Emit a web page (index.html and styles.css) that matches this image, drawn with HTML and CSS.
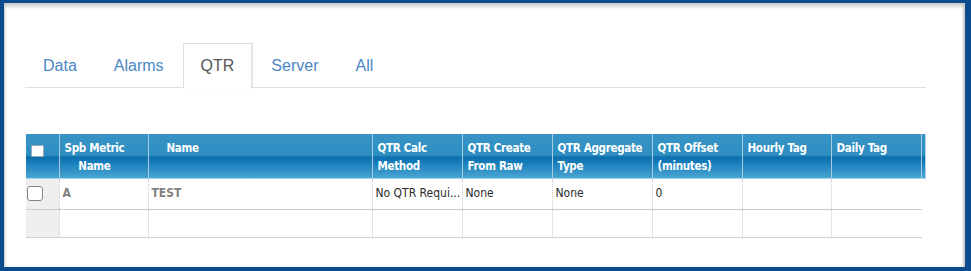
FILE: index.html
```html
<!DOCTYPE html>
<html lang="en">
<head>
<meta charset="UTF-8">
<title>QTR</title>
<link rel="stylesheet" href="styles.css">
</head>
<body>
<div class="frame">
  <ul class="tabs">
    <li class="tab">Data</li>
    <li class="tab">Alarms</li>
    <li class="tab active">QTR</li>
    <li class="tab">Server</li>
    <li class="tab">All</li>
  </ul>

  <div class="grid">
    <div class="grid-header">
      <table>
        <colgroup>
          <col class="c-check"><col class="c-spb"><col class="c-name"><col class="c-calc"><col class="c-raw">
          <col class="c-aggr"><col class="c-offset"><col class="c-hourly"><col class="c-daily">
        </colgroup>
        <tr>
          <th class="check-cell"><span class="check check-head"></span></th>
          <th><span class="centered">Spb Metric<br>Name</span></th>
          <th class="name-head">Name</th>
          <th>QTR Calc<br>Method</th>
          <th>QTR Create<br>From Raw</th>
          <th>QTR Aggregate<br>Type</th>
          <th>QTR Offset<br>(minutes)</th>
          <th>Hourly Tag</th>
          <th>Daily Tag</th>
        </tr>
      </table>
    </div>
    <div class="grid-content">
      <table>
        <colgroup>
          <col class="c-check"><col class="c-spb"><col class="c-name"><col class="c-calc"><col class="c-raw">
          <col class="c-aggr"><col class="c-offset"><col class="c-hourly"><col class="c-daily">
        </colgroup>
        <tr class="row-first">
          <td class="check-cell"><span class="check"></span></td>
          <td class="muted">A</td>
          <td class="muted">TEST</td>
          <td>No QTR Requi...</td>
          <td>None</td>
          <td>None</td>
          <td>0</td>
          <td></td>
          <td></td>
        </tr>
        <tr class="row-empty">
          <td class="check-cell"></td>
          <td></td><td></td><td></td><td></td><td></td><td></td><td></td><td></td>
        </tr>
      </table>
    </div>
  </div>
</div>
</body>
</html>
```

FILE: styles.css
```css
html, body {
  margin: 0;
  padding: 0;
}
body {
  width: 971px;
  height: 271px;
  font-family: "Liberation Sans", Arial, sans-serif;
  background: #0c4b8e;
}
div.frame {  /* white panel inside the blue frame */
  box-sizing: border-box;
  height: 271px;
  border-style: solid;
  border-color: #0c4b8e;
  border-width: 3px 6px 4px 4px;
  background: #fff;
  box-shadow: inset 0 4px 4px -1px #c4c4c4, inset 2px 0 2px -1px #cfcfcf, inset -3px 0 2px -1px #cfcfcf;
  padding: 40px 39px 0 21px;
}

/* ----- tabs ----- */
ul.tabs {
  display: flex;
  margin: 0;
  padding: 0;
  list-style: none;
  border-bottom: 1px solid #dedede;
}
li.tab {
  height: 43px;
  line-height: 43px;
  padding: 0 17px;
  margin: 0 1px -1px 0;
  border: 1px solid transparent;
  border-bottom: none;
  font-size: 16px;
  color: #4a87c6;
}
li.tab.active {
  color: #565656;
  background: #fff;
  height: 44px;
  border-color: #dedede;
  box-shadow: 1px 0 1px rgba(0, 0, 0, 0.08);
}

/* ----- grid ----- */
div.grid {
  margin: 46px 0 0 1px;
  width: 900px;
  font-family: "DejaVu Sans Condensed", "DejaVu Sans", Tahoma, sans-serif;
  font-size: 12px;
}
div.grid table {
  table-layout: fixed;
  border-collapse: collapse;
  width: 896px;
}
col.c-check { width: 33px; }
col.c-spb { width: 89px; }
col.c-name { width: 224px; }
col.c-calc { width: 90px; }
col.c-raw { width: 90px; }
col.c-aggr { width: 100px; }
col.c-offset { width: 90px; }
col.c-hourly { width: 89px; }
col.c-daily { width: 91px; }

div.grid-header {
  padding-right: 3px;
  border-right: 1px solid #a8d8ef;
  border-bottom: 1px solid #9fd8f2;
  background: linear-gradient(to bottom, #3793c4 0%, #2e8ec2 48%, #0b6dac 53%, #137ab8 62%, #4aa5d2 100%);
  position: relative;
}
div.grid-header::after {  /* gutter divider */
  content: "";
  position: absolute;
  top: 0;
  bottom: 0;
  right: 3px;
  border-left: 1px solid #a9cbe0;
}
div.grid-header th {
  height: 39px;
  padding: 5px 4px 0 5px;
  vertical-align: top;
  text-align: left;
  font-size: 11.5px;
  letter-spacing: -0.3px;
  font-weight: bold;
  line-height: 18px;
  color: #fff;
  border-left: 1px solid #a9cbe0;
  white-space: nowrap;
}
div.grid-header th:first-child {
  border-left: none;
}
span.centered {
  display: inline-block;
  text-align: center;
}
div.grid-header th.name-head {
  padding-left: 18px;
}
div.grid-header th.check-cell {
  height: 33px;
  padding: 11px 0 0 5px;
}

div.grid-content td {
  padding: 7px 3px 0 3px;
  vertical-align: top;
  line-height: 14px;
  color: #2b2b2b;
  border-left: 1px dotted #c8c8c8;
  white-space: nowrap;
  overflow: hidden;
}
div.grid-content td.muted {
  color: #808080;
  font-weight: bold;
}
tr.row-first td {
  height: 23px;
  border-bottom: 1px solid #cbcbcb;
}
tr.row-empty td {
  height: 20px;
  border-bottom: 1px solid #d2d2d2;
}
div.grid-content td.check-cell {
  background: #efefef;
  border-left: none;
  padding: 7px 0 0 1px;
}

span.check {  /* row checkbox */
  display: block;
  box-sizing: border-box;
  width: 16px;
  height: 15px;
  border: 1px solid #858585;
  border-radius: 3px;
  background: #fff;
}
span.check.check-head {
  width: 13px;
  height: 12px;
  border: 1px solid #9ab;
  border-radius: 1px;
}
```
